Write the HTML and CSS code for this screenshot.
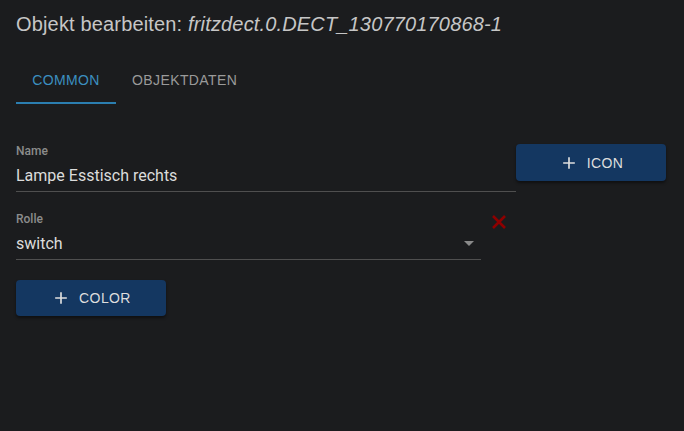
FILE: index.html
```html
<!DOCTYPE html>
<html lang="de">
<head>
<meta charset="utf-8">
<title>Objekt bearbeiten</title>
<link rel="stylesheet" href="styles.css">
</head>
<body>
<div class="dialog">
  <h1 class="title">Objekt bearbeiten: <i>fritzdect.0.DECT_130770170868-1</i></h1>
  <div class="tabs">
    <div class="tab active">COMMON</div>
    <div class="tab">OBJEKTDATEN</div>
  </div>
  <div class="form">
    <div class="row">
      <div class="field name-field">
        <div class="label">Name</div>
        <div class="value">Lampe Esstisch rechts</div>
      </div>
      <button class="btn">
        <svg class="plus" viewBox="0 0 24 24"><path d="M19 13h-6v6h-2v-6H5v-2h6V5h2v6h6v2z"/></svg>
        <span>ICON</span>
      </button>
    </div>
    <div class="row">
      <div class="field select-field">
        <div class="label">Rolle</div>
        <div class="value select">switch
          <svg class="caret" viewBox="0 0 10 5"><path d="M0 0h10L5 5z"/></svg>
        </div>
      </div>
      <svg class="clear" viewBox="0 0 16 16"><path d="M2 2L14 14M14 2L2 14"/></svg>
    </div>
    <div class="row">
      <button class="btn short">
        <svg class="plus" viewBox="0 0 24 24"><path d="M19 13h-6v6h-2v-6H5v-2h6V5h2v6h6v2z"/></svg>
        <span>COLOR</span>
      </button>
    </div>
  </div>
</div>
</body>
</html>
```

FILE: styles.css
```css
html, body {
  margin: 0;
  padding: 0;
  background: #1b1c1e;
  height: 100%;
}
.dialog {
  padding: 12px 16px 0 16px;
  font-family: "Liberation Sans", Arial, sans-serif;
}
.title {
  margin: 0;
  font-size: 20px;
  line-height: 24px;
  font-weight: 400;
  letter-spacing: 0.16px;
  color: #c6c6c6;
}
.title i {
  font-style: italic;
}
.tabs {
  display: flex;
  margin-top: 20px;
  height: 48px;
}
.tab {
  padding: 0 16px;
  min-width: 68px;
  display: flex;
  align-items: center;
  justify-content: center;
  font-size: 14px;
  letter-spacing: 0.4px;
  color: #9a9a9a;
  box-sizing: border-box;
  border-bottom: 2px solid transparent;
  padding-top: 2px;
}
.tab.active {
  color: #3b8fc0;
  border-bottom-color: #2b7eb0;
  width: 100px;
}
.form {
  margin-top: 40px;
  display: flex;
  flex-direction: column;
  gap: 20px;
}
.row {
  display: flex;
  align-items: flex-start;
}
.field {
  font-family: Roboto, "Liberation Sans", sans-serif;
  border-bottom: 1px solid #4f4f4f;
}
.name-field { width: 500px; }
.select-field { width: 465px; }
.label {
  font-size: 12px;
  line-height: 14px;
  font-weight: 500;
  color: #8c8c8c;
  margin-bottom: 6px;
}
.value {
  font-size: 16px;
  line-height: 24px;
  color: #dcdcdc;
  padding-bottom: 3px;
}
.select {
  display: flex;
  justify-content: space-between;
  align-items: center;
}
.caret {
  width: 10px;
  height: 5px;
  fill: #8a8a8a;
  margin-right: 7px;
  margin-top: -1px;
}
.clear {
  width: 16px;
  height: 16px;
  margin: 2px 0 0 10px;
  stroke: #8e0000;
  stroke-width: 2.6;
  fill: none;
}
.btn {
  width: 150px;
  height: 37px;
  border: none;
  border-radius: 4px;
  background: #143761;
  color: #dedede;
  font-family: "Liberation Sans", Arial, sans-serif;
  font-size: 14px;
  letter-spacing: 0.4px;
  display: flex;
  align-items: center;
  justify-content: center;
  box-shadow: 0 2px 3px rgba(0,0,0,0.45);
  padding: 0;
}
.btn.short {
  height: 36px;
}
.btn .plus {
  width: 20px;
  height: 20px;
  fill: #dedede;
  margin-right: 8px;
}
```
